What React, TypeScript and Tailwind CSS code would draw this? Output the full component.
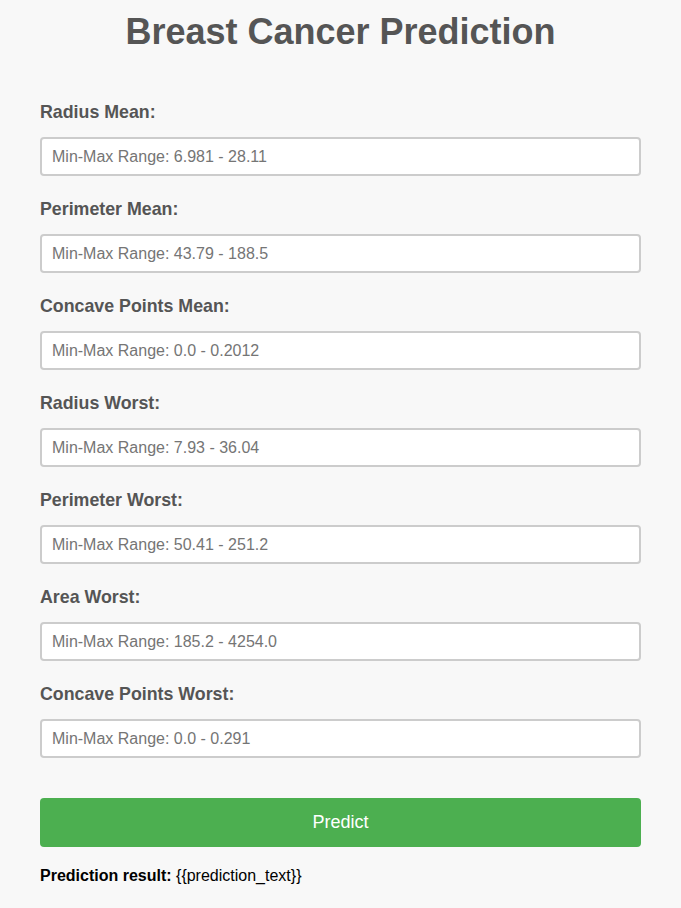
const fields = [
  { label: "Radius Mean:", range: "6.981 - 28.11" },
  { label: "Perimeter Mean:", range: "43.79 - 188.5" },
  { label: "Concave Points Mean:", range: "0.0 - 0.2012" },
  { label: "Radius Worst:", range: "7.93 - 36.04" },
  { label: "Perimeter Worst:", range: "50.41 - 251.2" },
  { label: "Area Worst:", range: "185.2 - 4254.0" },
  { label: "Concave Points Worst:", range: "0.0 - 0.291" },
];

export default function App() {
  return (
    <div className="min-h-[908px] bg-[#f8f8f8] font-['Liberation_Sans',Arial,sans-serif] px-[40px] pt-[11px]">
      <h1 className="text-center text-[36px] leading-[41px] font-bold text-[#555555]">
        Breast Cancer Prediction
      </h1>
      <form className="mt-[51px] flex flex-col" onSubmit={(e) => e.preventDefault()}>
        {fields.map((f) => (
          <div key={f.label} className="flex flex-col mb-[24px]">
            <label className="text-[17.8px] leading-[18px] font-bold text-[#555555]">{f.label}</label>
            <input
              type="text"
              placeholder={`Min-Max Range: ${f.range}`}
              className="mt-[16px] h-[39px] w-full rounded-[4px] border-2 border-[#cccccc] bg-white px-[10px] text-[16px] text-[#333333] placeholder:text-[#757575] outline-none"
            />
          </div>
        ))}
        <button
          type="submit"
          className="mt-[16px] h-[49px] w-full rounded-[4px] bg-[#4caf50] text-[18px] text-white"
        >
          Predict
        </button>
      </form>
      <p className="mt-[20px] text-[16px] leading-[18px] text-black">
        <span className="font-bold">Prediction result:</span> {"{{prediction_text}}"}
      </p>
    </div>
  );
}
